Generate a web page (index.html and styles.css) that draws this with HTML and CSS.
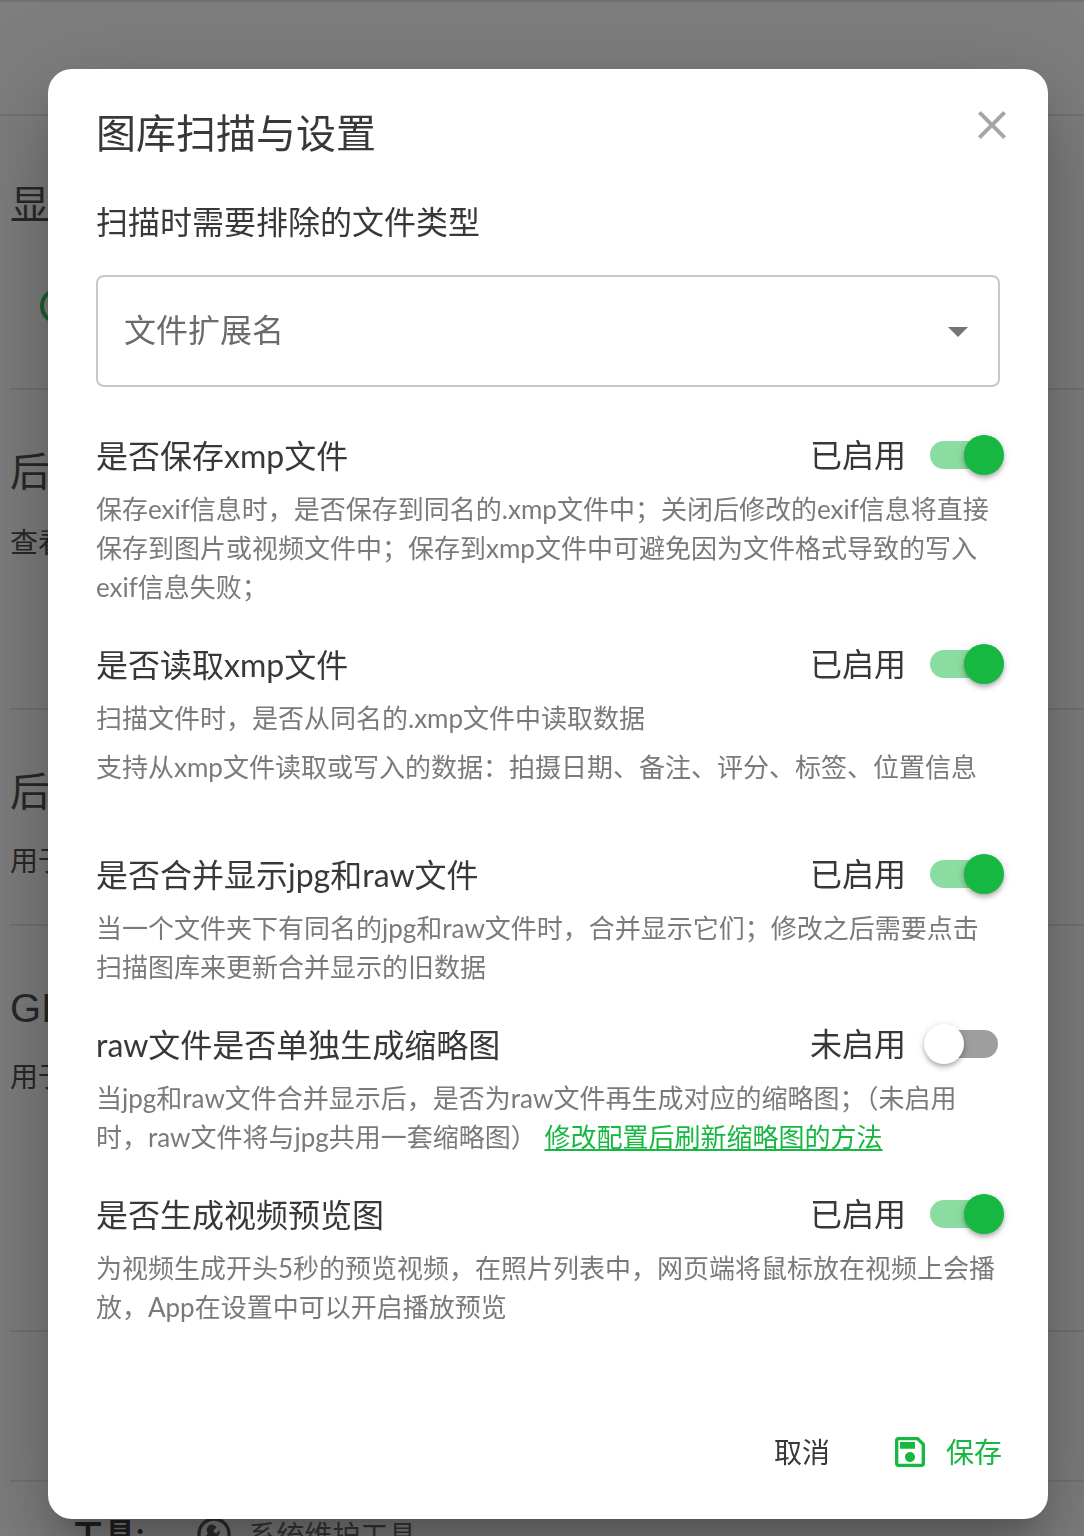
FILE: index.html
```html
<!DOCTYPE html>
<html lang="zh-CN">
<head>
<meta charset="utf-8">
<title>图库扫描与设置</title>
<link rel="stylesheet" href="styles.css">
</head>
<body>
<div class="page">
  <header class="bar"></header>
  <section class="sec sec-a">
    <h2 class="sec-title">显</h2>
    <div class="ring"></div>
  </section>
  <section class="sec sec-b">
    <h2 class="sec-title">后</h2>
    <p class="sec-sub">查看</p>
  </section>
  <section class="sec sec-c">
    <h2 class="sec-title">后</h2>
    <p class="sec-sub">用于</p>
  </section>
  <section class="sec sec-d">
    <h2 class="sec-title">GIF</h2>
    <p class="sec-sub">用于</p>
  </section>
  <section class="sec sec-e"></section>
  <section class="tools">
    <b class="tools-label">工具:</b>
    <svg class="tools-icon" viewBox="0 0 24 24"><path d="M12 2A10 10 0 0 0 2 12A10 10 0 0 0 12 22A10 10 0 0 0 22 12A10 10 0 0 0 12 2M12 4A8 8 0 0 1 20 12A8 8 0 0 1 12 20A8 8 0 0 1 4 12A8 8 0 0 1 12 4M9.5 6.5A3.5 3.5 0 0 0 8.4 11.8L6.5 13.7L8.3 15.5L10.2 13.6A3.5 3.5 0 0 0 15.4 9.8L13.2 11.8L11.5 10.2L13.5 8A3.5 3.5 0 0 0 9.5 6.5Z"/></svg>
    <span class="tools-text">系统维护工具</span>
  </section>
</div>
<div class="overlay"></div>
<div class="dialog">
  <div class="dlg-head">
    <h1 class="dlg-title">图库扫描与设置</h1>
    <svg class="dlg-close" viewBox="0 0 24 24"><path d="M19,6.41L17.59,5L12,10.59L6.41,5L5,6.41L10.59,12L5,17.59L6.41,19L12,13.41L17.59,19L19,17.59L13.41,12L19,6.41Z"/></svg>
  </div>
  <div class="field-label">扫描时需要排除的文件类型</div>
  <div class="select">
    <span class="select-text">文件扩展名</span>
    <span class="select-arrow"></span>
  </div>
  <div class="opts">
    <div class="opt">
      <div class="opt-head">
        <span class="opt-name">是否保存xmp文件</span>
        <span class="opt-state">已启用</span>
        <span class="sw on"><i></i></span>
      </div>
      <p class="opt-desc">保存exif信息时，是否保存到同名的.xmp文件中；关闭后修改的exif信息将直接保存到图片或视频文件中；保存到xmp文件中可避免因为文件格式导致的写入exif信息失败；</p>
    </div>
    <div class="opt">
      <div class="opt-head">
        <span class="opt-name">是否读取xmp文件</span>
        <span class="opt-state">已启用</span>
        <span class="sw on"><i></i></span>
      </div>
      <p class="opt-desc para">扫描文件时，是否从同名的.xmp文件中读取数据</p>
      <p class="opt-desc para-last">支持从xmp文件读取或写入的数据：拍摄日期、备注、评分、标签、位置信息</p>
    </div>
    <div class="opt">
      <div class="opt-head">
        <span class="opt-name">是否合并显示jpg和raw文件</span>
        <span class="opt-state">已启用</span>
        <span class="sw on"><i></i></span>
      </div>
      <p class="opt-desc">当一个文件夹下有同名的jpg和raw文件时，合并显示它们；修改之后需要点击扫描图库来更新合并显示的旧数据</p>
    </div>
    <div class="opt">
      <div class="opt-head">
        <span class="opt-name">raw文件是否单独生成缩略图</span>
        <span class="opt-state">未启用</span>
        <span class="sw"><i></i></span>
      </div>
      <p class="opt-desc">当jpg和raw文件合并显示后，是否为raw文件再生成对应的缩略图；（未启用时，raw文件将与jpg共用一套缩略图） <a class="link" href="#">修改配置后刷新缩略图的方法</a></p>
    </div>
    <div class="opt">
      <div class="opt-head">
        <span class="opt-name">是否生成视频预览图</span>
        <span class="opt-state">已启用</span>
        <span class="sw on"><i></i></span>
      </div>
      <p class="opt-desc">为视频生成开头5秒的预览视频，在照片列表中，网页端将鼠标放在视频上会播放，App在设置中可以开启播放预览</p>
    </div>
  </div>
  <div class="dlg-foot">
    <span class="btn">取消</span>
    <span class="btn btn-save">
      <svg class="save-icon" viewBox="0 0 24 24"><path d="M17 3H5C3.89 3 3 3.9 3 5V19C3 20.1 3.89 21 5 21H19C20.1 21 21 20.1 21 19V7L17 3M19 19H5V5H16.17L19 7.83V19M12 12C10.34 12 9 13.34 9 15S10.34 18 12 18 15 16.66 15 15 13.66 12 12 12M6 6H15V10H6V6Z"/></svg>
      保存
    </span>
  </div>
</div>
</body>
</html>
```
FILE: styles.css
```css
* { box-sizing: border-box; }
html, body { margin: 0; height: 100%; overflow: hidden; }
body {
  width: 1084px;
  height: 1536px;
  background: #fff;
  color: #333;
  font-family: Lato, "Noto Sans CJK SC", sans-serif;
  position: relative;
}
h1, h2, p { margin: 0; font-weight: 400; }

/* page behind the dialog */
.page { height: 1536px; overflow: hidden; }
.bar { height: 116px; border-top: 2px solid #ddd; border-bottom: 2px solid #e4e4e4; }
.sec { margin-left: 10px; border-bottom: 2px solid #e4e4e4; padding-top: 54px; }
.sec-a { height: 274px; padding-top: 61px; }
.sec-b { height: 320px; }
.sec-c { height: 216px; }
.sec-d { height: 406px; }
.sec-e { height: 150px; }
.sec-title { font-size: 40px; line-height: 56px; color: #333; white-space: nowrap; font-family: "Liberation Sans", "Noto Sans CJK SC", sans-serif; }
.sec-sub { font-size: 28px; line-height: 40px; margin-top: 22px; color: #333; white-space: nowrap; }
.sec-c .sec-sub, .sec-d .sec-sub { margin-top: 20px; }
.ring { width: 36px; height: 36px; margin: 55px 0 0 30px; border: 4px solid #16b841; border-radius: 50%; }
.tools { display: flex; align-items: center; padding: 24px 0 0 72px; height: 80px; }
.tools-label { font-size: 32px; line-height: 44px; color: #222; }
.tools-icon { width: 40px; height: 40px; margin-left: 50px; fill: #444; flex: none; }
.tools-text { font-size: 28px; margin-left: 14px; color: #555; }

.overlay { position: fixed; inset: 0; background: rgba(33, 33, 33, .58); }

/* dialog */
.dialog {
  position: absolute;
  left: 48px;
  top: 69px;
  width: 1000px;
  height: 1450px;
  padding: 32px 48px 39px;
  display: flex;
  flex-direction: column;
  background: #fff;
  border-radius: 24px;
  box-shadow: 0 22px 30px -14px rgba(0,0,0,.2), 0 48px 76px 6px rgba(0,0,0,.14), 0 18px 92px 16px rgba(0,0,0,.12);
}
.dlg-head { display: flex; justify-content: space-between; align-items: flex-start; }
.dlg-title { font-size: 40px; line-height: 64px; color: #383838; }
.dlg-close { width: 48px; height: 48px; margin-right: -16px; fill: #a6a6a6; }
.field-label { font-size: 32px; line-height: 48px; margin-top: 33px; color: #383838; }
.select {
  margin-top: 29px;
  height: 112px;
  border: 2px solid #c8c8c8;
  border-radius: 8px;
  display: flex;
  align-items: center;
  justify-content: space-between;
  padding: 0 30px 0 26px;
}
.select-text { font-size: 32px; line-height: 48px; color: #6b6b6b; margin-top: -2px; }
.select-arrow {
  width: 0;
  height: 0;
  border-left: 10px solid transparent;
  border-right: 10px solid transparent;
  border-top: 10px solid #757575;
  margin-top: 2px;
}
.opts { margin-top: 45px; display: flex; flex-direction: column; gap: 34px; }
.opt-head { display: flex; align-items: center; height: 48px; margin-bottom: 10px; padding-right: 2px; }
.opt-name { font-size: 32px; line-height: 48px; color: #383838; flex: 1; }
.opt-state { font-size: 32px; line-height: 48px; color: #383838; margin: 0 24px 3px 0; }
.opt-desc { font-size: 26px; line-height: 39px; color: #7a7a7a; }
.para { margin-bottom: 10px; }
.para-last { margin-bottom: 30px; }
.link { color: #16b841; text-decoration: underline; margin-left: 1px; }

.sw { position: relative; display: block; width: 68px; height: 28px; top: -1px; border-radius: 14px; background: #9e9e9e; flex: none; }
.sw i {
  position: absolute;
  left: -6px;
  top: -6px;
  width: 40px;
  height: 40px;
  border-radius: 50%;
  background: #fff;
  box-shadow: 0 2px 4px -1px rgba(0,0,0,.2), 0 4px 5px 0 rgba(0,0,0,.14), 0 1px 10px 0 rgba(0,0,0,.12);
}
.sw.on { background: #8bdca0; }
.sw.on i { left: 34px; background: #16b841; }

.dlg-foot { margin-top: auto; margin-right: -2px; display: flex; justify-content: flex-end; align-items: center; gap: 60px; }
.btn { display: inline-flex; align-items: center; height: 56px; padding-bottom: 2px; font-size: 28px; color: #383838; }
.btn-save { color: #16b841; }
.save-icon { width: 40px; height: 40px; margin: 2px 16px 0 0; fill: #16b841; }
```
